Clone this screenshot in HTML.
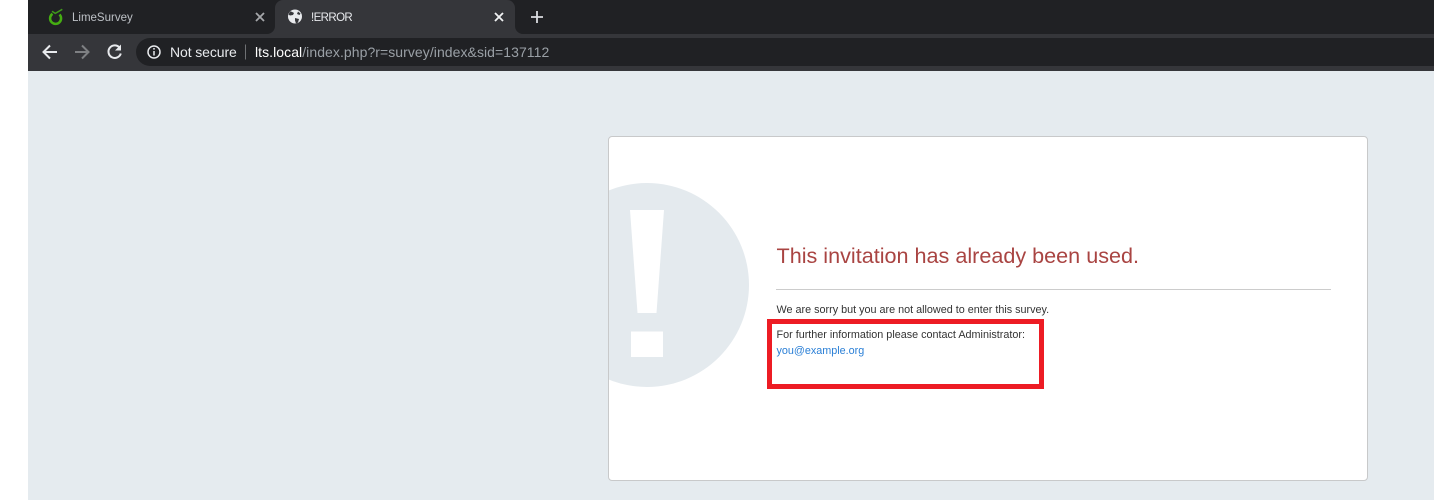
<!DOCTYPE html>
<html>
<head>
<meta charset="utf-8">
<style>
html,body{margin:0;padding:0;width:1434px;height:500px;overflow:hidden;background:#fff;font-family:"Liberation Sans",sans-serif}
.a{position:absolute;white-space:nowrap}
</style>
</head>
<body>
<div class="a" style="left:28px;top:0;width:1406px;height:34px;background:#202124"></div>
<div class="a" style="left:28px;top:34px;width:1406px;height:37px;background:#35363a"></div>
<div class="a" style="left:275px;top:0;width:240px;height:34px;background:#35363a;border-radius:8px 8px 0 0"></div>
<div class="a" style="left:136px;top:38px;width:1298px;height:28px;background:#202124;border-radius:14px 0 0 14px"></div>
<svg class="a" style="left:0;top:0" width="600" height="71" viewBox="0 0 600 71" fill="none">
  <path d="M267 34a8 8 0 0 0 8-8v8zM515 26a8 8 0 0 0 8 8h-8z" fill="#35363a"/>
  <path d="M52.500 13.800A5.500 5.500 0 1 0 59.500 14.500" stroke="#45ad12" stroke-width="2.500"/>
  <path d="M52 11.200l3.300 2.200 7-4.100" stroke="#3f9a1a" stroke-width="1.500"/>
  <path d="M256 13l8 8M264 13l-8 8" stroke="#a5a7aa" stroke-width="1.800"/>
  <path d="M495 13l8 8M503 13l-8 8" stroke="#f1f3f4" stroke-width="1.800"/>
  <path d="M537 11v12M531 17h12" stroke="#dadce0" stroke-width="1.800"/>
  <circle cx="295" cy="16.500" r="7" fill="#e8eaed"/>
  <path d="M290 11.500c2 0 3 1 4 1.500l-1 2-3 .5-1.500-1zM295 18l4 1-1 3.500-2 1-1-3zM298 11.500l2.500 2-1 1.500-2.500-1z" fill="#35363a"/>
  <path d="M57 52H44M50 45.500L43.500 52l6.500 6.500" stroke="#e8eaed" stroke-width="2"/>
  <path d="M75 52h13M82 45.500l6.500 6.500-6.500 6.500" stroke="#7e8083" stroke-width="2"/>
  <path d="M119.500 47.500a6.300 6.300 0 1 0 1.300 6" stroke="#e8eaed" stroke-width="2"/>
  <path d="M121 44.500v6h-6z" fill="#e8eaed"/>
  <circle cx="154" cy="52" r="6" stroke="#e8eaed" stroke-width="1.500"/>
  <path d="M154 51v4.500M154 48v1.600" stroke="#e8eaed" stroke-width="1.500"/>
  <path d="M245.500 44.500v15" stroke="#6f7174" stroke-width="1"/>
</svg>
<div class="a" style="left:72px;top:11px;font-size:11.500px;line-height:14px;color:#bdc1c6">LimeSurvey</div>
<div class="a" style="left:311px;top:11px;font-size:11.500px;line-height:14px;color:#e8eaed;letter-spacing:-.6px">!ERROR</div>
<div class="a" style="left:170px;top:44px;font-size:14px;line-height:16px;color:#e8eaed;letter-spacing:-.1px">Not secure</div>
<div class="a" style="left:255px;top:44px;font-size:14px;line-height:16px;color:#9aa0a6;letter-spacing:.06px"><span style="color:#fff">lts.local</span>/index.php?r=survey/index&amp;sid=137112</div>

<div class="a" style="left:28px;top:71px;width:1406px;height:429px;background:#e5ebef"></div>
<div class="a" style="left:608px;top:136px;width:758px;height:343px;background:#fff;border:1px solid #c8c9ca;border-radius:4px;overflow:hidden">
  <svg style="position:absolute;left:-1px;top:-1px" width="200" height="300" viewBox="608 136 200 300">
    <circle cx="647" cy="285" r="102" fill="#e4eaee"/>
    <path d="M630 210H664L656.500 313H637.500Z" fill="#fff"/>
    <rect x="631" y="331.500" width="32" height="25.500" fill="#fff"/>
  </svg>
</div>
<div class="a" style="left:776.500px;top:243px;font-size:21.600px;line-height:26px;color:#a94442">This invitation has already been used.</div>
<div class="a" style="left:776px;top:289px;width:555px;height:1px;background:#ccc"></div>
<div class="a" style="left:776.500px;top:303px;font-size:10.800px;line-height:14px;color:#333">We are sorry but you are not allowed to enter this survey.</div>
<div class="a" style="left:776.500px;top:328px;font-size:10.800px;line-height:14px;color:#333">For further information please contact Administrator:</div>
<div class="a" style="left:776.500px;top:344px;font-size:10.800px;line-height:14px;color:#2a7fd6">you@example.org</div>
<div class="a" style="left:767px;top:319px;width:267px;height:60px;border:5px solid #ed1c24"></div>
</body>
</html>
